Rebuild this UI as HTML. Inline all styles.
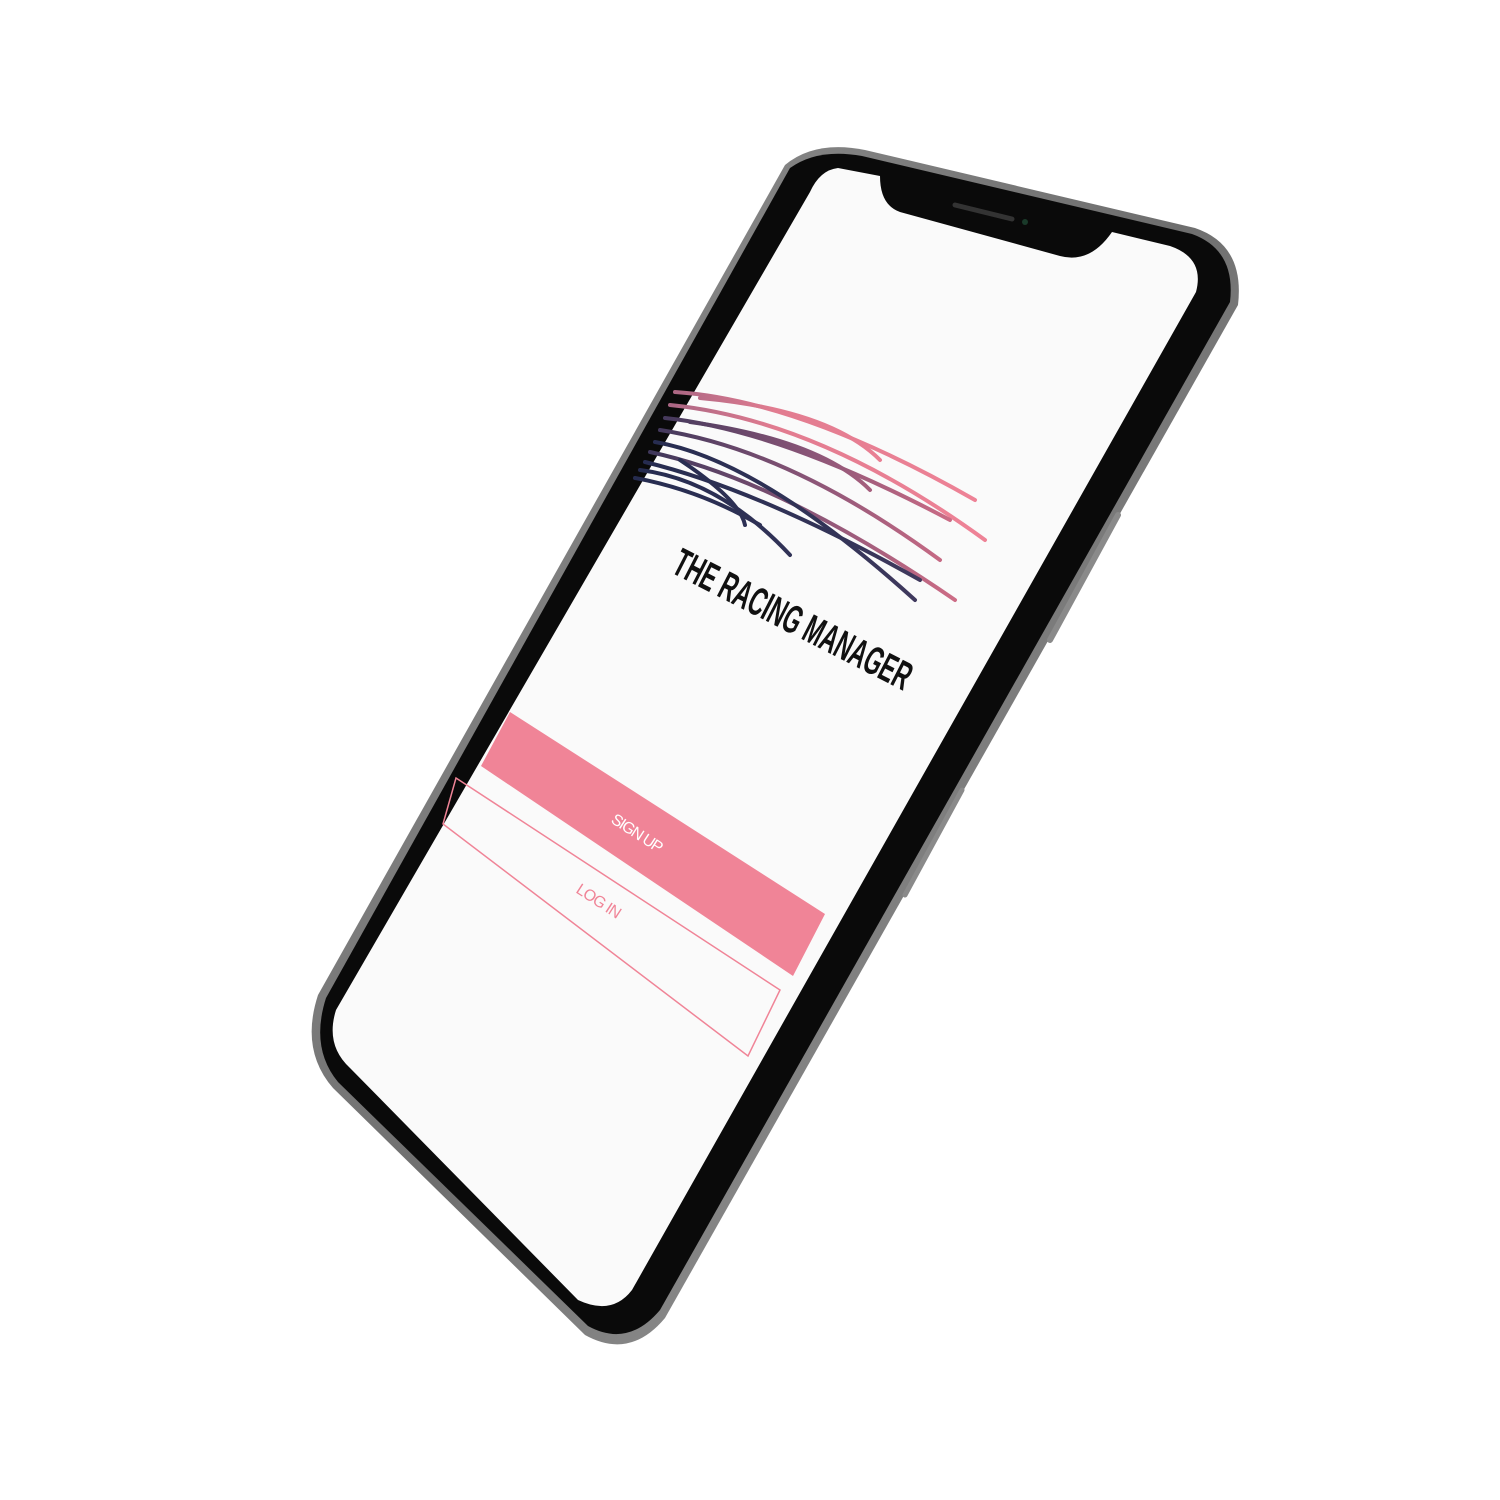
<!DOCTYPE html>
<html><head><meta charset="utf-8"><style>
html,body{margin:0;padding:0;background:#fff;width:1500px;height:1500px;overflow:hidden}
</style></head><body>
<svg width="1500" height="1500" viewBox="0 0 1500 1500" xmlns="http://www.w3.org/2000/svg">
<defs>
<linearGradient id="fr" x1="0" y1="0" x2="1" y2="1">
<stop offset="0" stop-color="#9a9a9a"/><stop offset="0.5" stop-color="#6e6e6e"/><stop offset="1" stop-color="#b0b0b0"/>
</linearGradient>
<linearGradient id="lp" x1="640" y1="0" x2="980" y2="0" gradientUnits="userSpaceOnUse">
<stop offset="0" stop-color="#9a6080"/><stop offset="0.4" stop-color="#e27c90"/><stop offset="1" stop-color="#ee8296"/>
</linearGradient>
<linearGradient id="lm" x1="640" y1="0" x2="980" y2="0" gradientUnits="userSpaceOnUse">
<stop offset="0" stop-color="#3a3558"/><stop offset="0.5" stop-color="#8a5577"/><stop offset="1" stop-color="#d87088"/>
</linearGradient>
<linearGradient id="ld" x1="640" y1="0" x2="980" y2="0" gradientUnits="userSpaceOnUse">
<stop offset="0" stop-color="#262c50"/><stop offset="0.6" stop-color="#343458"/><stop offset="1" stop-color="#4a3d62"/>
</linearGradient>
</defs>
<path d="M785 165 Q815 140 865 150 L1195 228 Q1245 245 1238 305 L665 1318 Q630 1360 585 1335 L333 1088 Q300 1050 318 995 Z" fill="url(#fr)"/>
<path d="M790 168 Q818 148 862 156 L1192 234 Q1236 250 1230 302 L660 1310 Q628 1348 588 1326 L338 1082 Q310 1048 326 998 Z" fill="#0a0a0a"/>
<path d="M838 168 L880 176 Q880 205 900 212 L1060 256 Q1090 264 1112 232 L1170 246 Q1205 258 1196 292 L632 1290 Q612 1316 578 1300 L350 1068 Q325 1045 336 1010 L810 192 Q820 170 838 168 Z" fill="#fafafa"/>
<path d="M955 205 L1012 219" stroke="#333" stroke-width="5" stroke-linecap="round"/>
<circle cx="1025" cy="222" r="3" fill="#1a3a2a"/>
<g fill="none" stroke-width="4" stroke-linecap="round">
<path stroke="url(#lp)" d="M675 392 Q800 400 975 500"/>
<path stroke="url(#lp)" d="M700 398 Q830 410 880 460"/>
<path stroke="url(#lp)" d="M670 405 Q820 420 985 540"/>
<path stroke="url(#lm)" d="M665 418 Q780 430 950 520"/>
<path stroke="url(#lm)" d="M690 422 Q820 440 870 490"/>
<path stroke="url(#lm)" d="M660 430 Q790 450 940 560"/>
<path stroke="url(#lm)" d="M650 452 Q780 480 955 600"/>
<path stroke="url(#ld)" d="M655 442 Q760 460 915 600"/>
<path stroke="url(#ld)" d="M645 462 Q760 490 920 580"/>
<path stroke="url(#ld)" d="M640 470 Q720 480 790 555"/>
<path stroke="url(#ld)" d="M635 478 Q700 490 760 525"/>
<path stroke="url(#ld)" d="M680 460 Q740 500 745 525"/>
</g>
<text transform="translate(670,572) rotate(27)" font-family="'Liberation Sans Narrow','Liberation Sans',sans-serif" font-weight="bold" font-size="40" textLength="262" lengthAdjust="spacingAndGlyphs" fill="#111">THE RACING MANAGER</text>
<path d="M510 712 L825 914 L793 976 L481 766 Z" fill="#f08497"/>
<text transform="translate(610,822) rotate(33)" font-family="'Liberation Sans',sans-serif" font-size="16" textLength="58" fill="#fff">SIGN UP</text>
<path d="M456 778 L780 990 L748 1056 L443 824 Z" fill="none" stroke="#f08497" stroke-width="1.5"/>
<text transform="translate(575,892) rotate(33)" font-family="'Liberation Sans',sans-serif" font-size="16" textLength="50" fill="#f08497">LOG IN</text>
<path d="M1118 515 L1050 640" stroke="#8a8a8a" stroke-width="6" stroke-linecap="round"/>
<path d="M962 790 L905 895" stroke="#8a8a8a" stroke-width="5" stroke-linecap="round"/>
</svg>
</body></html>
